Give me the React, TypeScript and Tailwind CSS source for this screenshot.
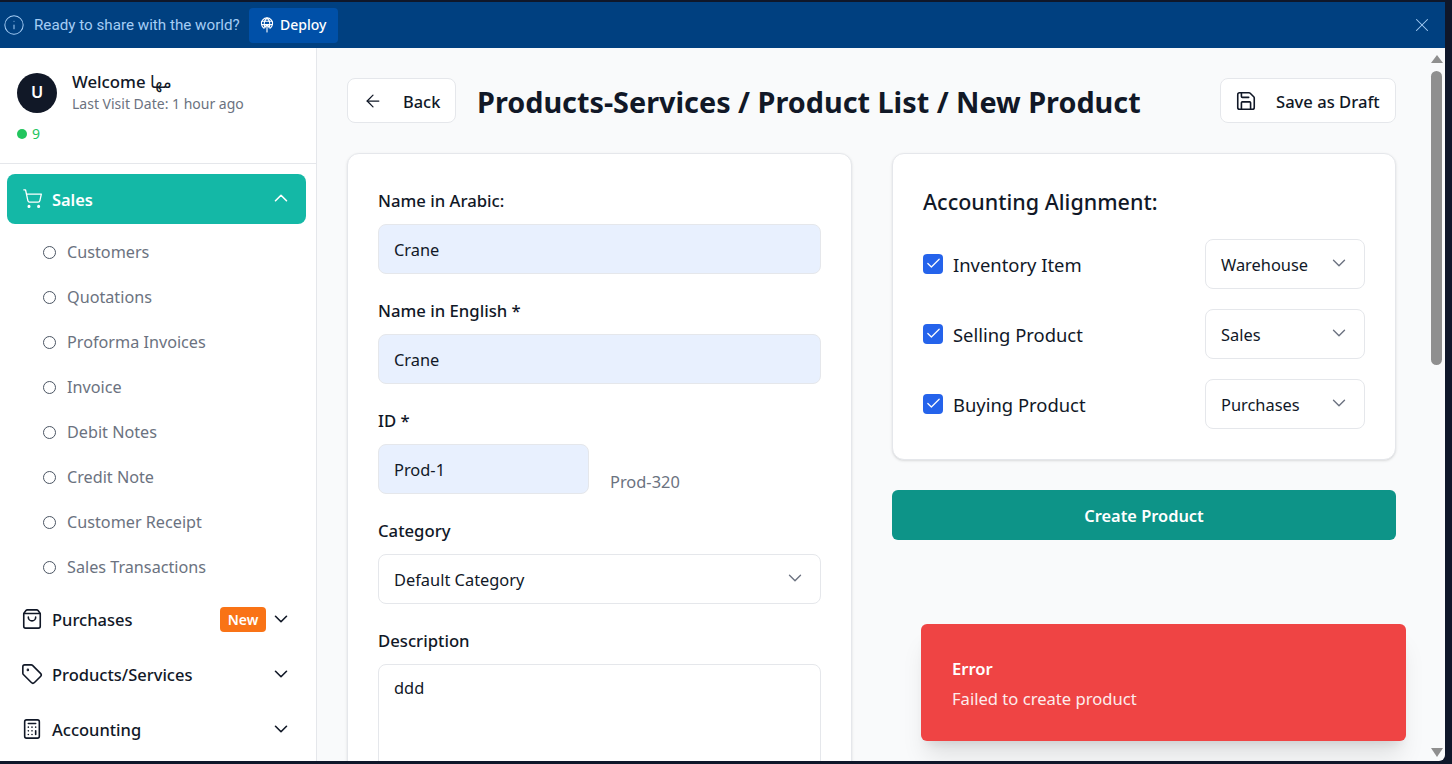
import { ArrowLeft, Calculator, Check, ChevronDown, ChevronUp, Info, Save, ShoppingBag, ShoppingCart, Tag, X } from 'lucide-react'

const salesLinks = [
  'Customers',
  'Quotations',
  'Proforma Invoices',
  'Invoice',
  'Debit Notes',
  'Credit Note',
  'Customer Receipt',
  'Sales Transactions',
]

const alignments = [
  { label: 'Inventory Item', account: 'Warehouse' },
  { label: 'Selling Product', account: 'Sales' },
  { label: 'Buying Product', account: 'Purchases' },
]

function DeployIcon() {
  return (
    <svg width="14" height="16" viewBox="0 0 14 16" fill="none" stroke="currentColor" strokeWidth="1.1" strokeLinecap="round">
      <path d="M4 11.2A5.6 5.6 0 1 1 10 11.2" />
      <path d="M1.6 4.2h10.8M1.6 7.6h10.8" />
      <path d="M5 10.8C3.8 7.5 4.2 3.5 7 1c2.8 2.5 3.2 6.5 2 9.8" />
      <path d="M7 15V7.8M4.8 10 7 7.8 9.2 10" />
    </svg>
  )
}

function NavGroup({ icon, label, badge }: { icon: React.ReactNode; label: string; badge?: string }) {
  return (
    <div className="flex h-[55px] items-center pl-[22px] pr-[24px] text-[#111827]">
      <span className="flex w-[20px] shrink-0 justify-center">{icon}</span>
      <span className="ml-[10px] flex-1 pt-[1px] text-[16.5px] font-medium">{label}</span>
      {badge && (
        <span className="mr-[4px] flex h-[25px] w-[46px] items-center justify-center rounded bg-[#f97316] text-sm font-semibold text-white">
          {badge}
        </span>
      )}
      <ChevronDown size={22} strokeWidth={1.75} className="mb-[2px] shrink-0" />
    </div>
  )
}

function Sidebar() {
  return (
    <aside className="flex h-full w-[317px] shrink-0 flex-col overflow-hidden border-r border-[#e5e7eb] bg-white">
      <div className="h-[116px] shrink-0 border-b border-[#e5e7eb] pl-[17px] pt-[23px]">
        <div className="flex items-center gap-[15px]">
          <div className="flex h-10 w-10 items-center justify-center rounded-full bg-[#111827] font-semibold text-white">U</div>
          <div className="-mt-[1px]">
            <div className="text-[16.8px] leading-[24px] font-medium text-[#111827]">Welcome مها</div>
            <div className="text-sm leading-[20px] text-[#6b7280]">Last Visit Date: 1 hour ago</div>
          </div>
        </div>
        <div className="mt-[10px] flex items-center gap-[5px] text-sm leading-[20px] text-[#22c55e]">
          <span className="h-[10px] w-[10px] rounded-full bg-[#22c55e]" />9
        </div>
      </div>
      <div className="pl-[7px] pr-[10px] pt-[10px]">
        <div className="flex h-[50px] items-center rounded-lg bg-[#14b8a6] pl-[15px] pr-[14px] text-white">
          <ShoppingCart size={21} strokeWidth={1.5} className="mb-[2px] shrink-0" />
          <span className="ml-[9px] flex-1 pt-[3px] font-semibold">Sales</span>
          <ChevronUp size={22} strokeWidth={1.75} className="mb-[2px] shrink-0" />
        </div>
      </div>
      <ul className="pb-[2px] pt-[6px]">
        {salesLinks.map((link) => (
          <li key={link} className="flex h-[45px] items-center pl-[43px] text-[16.2px] text-[#6b7280]">
            <span className="h-[13px] w-[13px] rounded-full border-[1.5px] border-[#4b5563]" />
            <span className="mb-[1px] ml-[11px]">{link}</span>
          </li>
        ))}
      </ul>
      <NavGroup icon={<ShoppingBag size={22} strokeWidth={1.75} className="mb-[2px] shrink-0" />} label="Purchases" badge="New" />
      <NavGroup icon={<Tag size={22} strokeWidth={1.75} className="mb-[2px] shrink-0" />} label="Products/Services" />
      <NavGroup icon={<Calculator size={22} strokeWidth={1.75} className="mb-[2px] shrink-0" />} label="Accounting" />
    </aside>
  )
}

function FieldLabel({ children }: { children: React.ReactNode }) {
  return <div className="mb-[11px] pt-[1px] text-[16.7px] font-medium leading-[24px] text-[#111827]">{children}</div>
}

function Field({ label, value }: { label: string; value: string }) {
  return (
    <div className="mb-[24px]">
      <FieldLabel>{label}</FieldLabel>
      <div className="flex h-[50px] items-center rounded-lg border border-[#e5e7eb] bg-[#e8f0fe] px-[15px] pt-[2px] text-[#111827]">{value}</div>
    </div>
  )
}

function ProductForm() {
  return (
    <section className="h-[700px] w-[505px] shrink-0 rounded-xl border border-[#e5e7eb] bg-white px-[30px] pt-[34px] shadow-sm">
      <Field label="Name in Arabic:" value="Crane" />
      <Field label="Name in English *" value="Crane" />
      <div className="mb-[24px]">
        <FieldLabel>ID *</FieldLabel>
        <div className="flex items-end">
          <div className="flex h-[50px] w-[211px] items-center rounded-lg border border-[#e5e7eb] bg-[#e8f0fe] px-[15px] pt-[2px] text-[#111827]">Prod-1</div>
          <span className="ml-[21px] leading-[24px] text-[#6b7280]">Prod-320</span>
        </div>
      </div>
      <div className="mb-[24px]">
        <FieldLabel>Category</FieldLabel>
        <div className="flex h-[50px] items-center justify-between rounded-lg border border-[#e5e7eb] bg-white pl-[15px] pr-[14px] text-[#111827]">
          <span className="pt-[2px]">Default Category</span>
          <ChevronDown size={22} strokeWidth={1.5} className="mb-[2px] shrink-0 text-[#6b7280]" />
        </div>
      </div>
      <div>
        <FieldLabel>Description</FieldLabel>
        <div className="h-[130px] rounded-lg border border-[#e5e7eb] bg-white px-[15px] py-[11px] text-[#111827]">ddd</div>
      </div>
    </section>
  )
}

function AccountingCard() {
  return (
    <section className="h-[307px] rounded-xl border border-[#e5e7eb] bg-white p-[30px] shadow-sm">
      <h2 className="text-[21.5px] leading-[36px] font-medium text-[#111827]">Accounting Alignment:</h2>
      <div className="mt-[19px] flex flex-col gap-[20px]">
        {alignments.map((row) => (
          <div key={row.label} className="flex h-[50px] items-center justify-between">
            <div className="flex items-center">
              <span className="flex h-5 w-5 items-center justify-center rounded bg-[#2563eb] text-white">
                <Check size={17} strokeWidth={1.75} />
              </span>
              <span className="ml-[10px] pt-[2px] text-[18.4px] text-[#111827]">{row.label}</span>
            </div>
            <div className="flex h-[50px] w-[160px] items-center justify-between rounded-lg border border-[#e5e7eb] bg-white pl-[15px] pr-[14px] text-[#111827]">
              <span className="pt-[2px]">{row.account}</span>
              <ChevronDown size={22} strokeWidth={1.5} className="mb-[2px] shrink-0 text-[#6b7280]" />
            </div>
          </div>
        ))}
      </div>
    </section>
  )
}

export default function App() {
  return (
    <div className="h-[764px] w-[1452px] overflow-hidden bg-[#0f172a] pb-[3px] pr-[7px] pt-[2px] text-[16.4px] [font-family:'Noto_Sans','DejaVu_Sans',sans-serif]">
      <div className="flex h-full flex-col overflow-hidden rounded-br-md">
        <header className="flex h-[46px] shrink-0 items-center bg-[#004080] pl-[3px] pr-[12px] text-[#a5cdf5]">
          <Info size={22} strokeWidth={1.1} className="shrink-0" />
          <span className="ml-[9px] text-[15.2px] [font-family:Roboto,sans-serif]">Ready to share with the world?</span>
          <button className="ml-[9px] flex h-[35px] w-[89px] items-center justify-center gap-[6px] rounded bg-[#0050a8] text-sm font-medium text-white">
            <DeployIcon />
            Deploy
          </button>
          <X size={22} strokeWidth={1.1} className="ml-auto shrink-0" />
        </header>
        <div className="relative flex min-h-0 flex-1">
          <Sidebar />
          <main className="min-w-0 flex-1 overflow-hidden bg-[#f9fafb] pl-[30px] pr-[32px] pt-[30px]">
            <div className="flex h-[45px] items-center justify-between">
              <div className="flex items-center">
                <button className="flex h-[45px] w-[109px] items-center rounded-lg border border-[#e5e7eb] bg-white pl-[15px] font-medium text-[#111827]">
                  <ArrowLeft size={20} strokeWidth={1.5} />
                  <span className="ml-[20px] pt-[3px]">Back</span>
                </button>
                <h1 className="ml-[21px] pt-[2px] text-[28.8px] font-bold text-[#111827]">Products-Services / Product List / New Product</h1>
              </div>
              <button className="flex h-[45px] w-[176px] items-center rounded-lg border border-[#e5e7eb] bg-white pl-[14px] text-[16.6px] font-medium text-[#111827]">
                <Save size={22} strokeWidth={1.75} />
                <span className="ml-[19px] pt-[3px]">Save as Draft</span>
              </button>
            </div>
            <div className="mt-[30px] flex gap-[40px]">
              <ProductForm />
              <div className="flex-1">
                <AccountingCard />
                <button className="mt-[30px] h-[50px] w-full rounded-md bg-[#0d9488] pt-[2px] font-semibold text-white">Create Product</button>
              </div>
            </div>
          </main>
          {/* native-looking scrollbar */}
          <div className="flex w-[17px] shrink-0 flex-col items-center bg-[#f9fafb] pt-[7px]">
            <span className="h-0 w-0 border-x-[6px] border-b-[8px] border-x-transparent border-b-[#8f8f8f]" />
            <span className="mt-[8px] h-[294px] w-[11px] rounded-full bg-[#8f8f8f]" />
            <span className="mt-auto mb-[4px] h-0 w-0 border-x-[6px] border-t-[9px] border-x-transparent border-t-[#8f8f8f]" />
          </div>
          <div className="absolute left-[921px] top-[576px] flex h-[117px] w-[485px] flex-col justify-center rounded-md bg-[#ef4444] pl-[31px] pt-[2px] text-[16.6px] text-white shadow-xl">
            <div className="font-semibold leading-[24px]">Error</div>
            <div className="mt-[6px] leading-[24px] opacity-90">Failed to create product</div>
          </div>
        </div>
      </div>
    </div>
  )
}
